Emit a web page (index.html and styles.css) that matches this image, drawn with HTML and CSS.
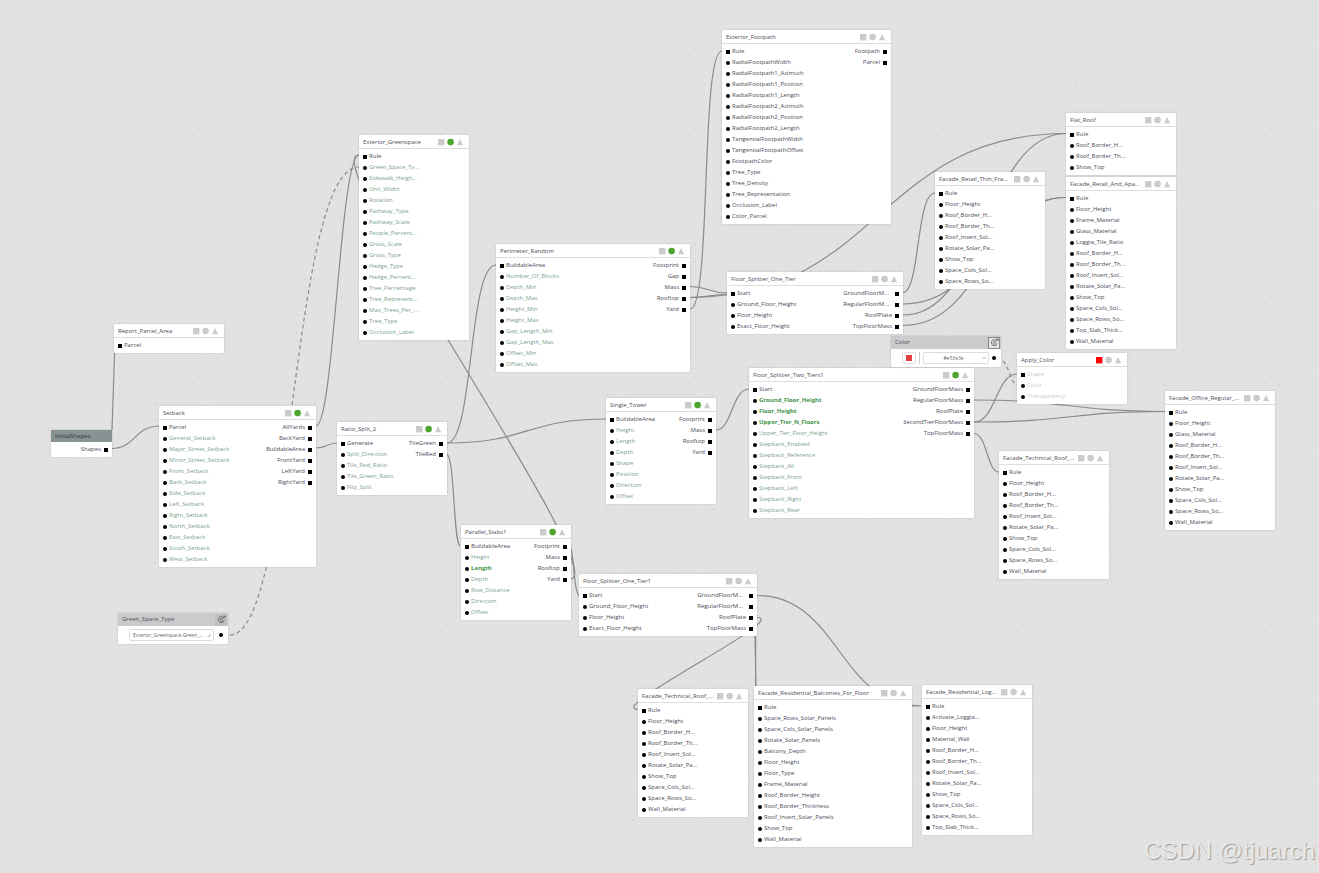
FILE: index.html
```html
<!DOCTYPE html>
<html lang="en">
<head>
<meta charset="utf-8">
<title>Rule graph</title>
<link rel="stylesheet" href="styles.css">
</head>
<body>
<svg class="defs" aria-hidden="true">
  <symbol id="flags" viewBox="0 0 26 8">
    <rect class="flag-square" x="0" y="1" width="6.4" height="6.4"/>
    <circle class="flag-circle" cx="12.6" cy="4.1" r="3.3"/>
    <path class="flag-triangle" d="M22.1 1 25.2 7.2H19Z"/>
  </symbol>
  <symbol id="link" viewBox="0 0 10 10">
    <path d="M7.6 3.4A3.3 3.3 0 1 0 8 5.6M6.2 4.3A1.5 1.5 0 1 0 6.2 5.9M5.4 5.1 8.9 1.2M6.8 1.1H9V3.2M3.4 8.2H7" fill="none" stroke="currentColor" stroke-width=".8"/>
  </symbol>
</svg>
<main class="canvas">
  <svg class="wires" aria-hidden="true">
    <defs>
      <pattern id="dots" width="8.86" height="8.86" patternUnits="userSpaceOnUse"><circle cx="4.3" cy="4.6" r=".65"/></pattern>
    </defs>
    <rect class="grid" width="100%" height="100%" fill="url(#dots)"/>
    <path d="M112 430 114.6 352"/>
    <path d="M112 448.5C135 448.5 135 426 159 426"/>
    <path d="M316 426C334 426 340 155 359 155"/>
    <path d="M570 579C616 579 313 155 359 155"/>
    <path class="dashed" d="M230 635C294 635 290 167 359 167"/>
    <path d="M316 448C328 448 326 443 338 443"/>
    <path d="M447 443C474 443 468 265 496 265"/>
    <path d="M447 443C527 443 527 419 606 419"/>
    <path d="M447 454C455 460 453 540 460 546"/>
    <path d="M570 546C575 558 573 590 579 596"/>
    <path d="M716 430C732 430 732 389 749 389"/>
    <path d="M690 286.5C708 286.5 709 293 727 293"/>
    <path d="M690 297.5C708 297.5 709 295 727 294"/>
    <path d="M690 309C712 309 700 51 722 51"/>
    <path d="M690 297.5C878 297.5 878 134 1066 133.5"/>
    <path d="M903 292.5C920 292.5 916 193 935 193"/>
    <path d="M903 304C985 304 985 198 1066 197.5"/>
    <path d="M903 315C985 315 985 134 1066 133.5"/>
    <path d="M903 325.5C985 325.5 985 198 1066 197.5"/>
    <path d="M974 400C1070 400 1070 411.5 1165 411.5"/>
    <path d="M974 422C996 422 996 374 1017 374"/>
    <path d="M974 422C1070 422 1070 411.5 1165 411.5"/>
    <path d="M974 433.5C987 433.5 987 472 999 472"/>
    <path class="dashed" d="M1003 361C1009 366 1010 382 1017 385"/>
    <path d="M757 595.5C839 595.5 839 706 921 706"/>
    <path d="M757 617.5C792 617.5 603 709.5 638 709.5"/>
    <path d="M755 636 756 687M755.6 636V687"/>
  </svg>

  <section class="node initial-shapes">
    <header><h2>InitialShapes</h2></header>
    <div class="ports"><ul class="out"><li>Shapes</li></ul></div>
  </section>

  <section class="node report">
    <header><h2>Report_Parcel_Area</h2><svg class="flags"><use href="#flags"/></svg></header>
    <div class="ports"><ul class="in"><li>Parcel</li></ul></div>
  </section>

  <section class="node active defaults setback">
    <header><h2>Setback</h2><svg class="flags"><use href="#flags"/></svg></header>
    <div class="ports">
      <ul class="in"><li>Parcel</li><li>General_Setback</li><li>Major_Street_Setback</li><li>Minor_Street_Setback</li><li>Front_Setback</li><li>Back_Setback</li><li>Side_Setback</li><li>Left_Setback</li><li>Right_Setback</li><li>North_Setback</li><li>East_Setback</li><li>South_Setback</li><li>West_Setback</li></ul>
      <ul class="out"><li>AllYards</li><li>BackYard</li><li>BuildableArea</li><li>FrontYard</li><li>LeftYard</li><li>RightYard</li></ul>
    </div>
  </section>

  <section class="node value green-space">
    <header><h2>Green_Space_Type</h2><button type="button" aria-label="Link Green_Space_Type"><svg><use href="#link"/></svg></button></header>
    <div class="field">
      <span class="pick"><select aria-label="Green_Space_Type"><option>Exterior_Greenspace.Green_...</option></select><svg viewBox="0 0 6 6"><path d="M1.5 4 2.5 5 4.5 2"/></svg></span>
      <span class="dot"></span>
    </div>
  </section>

  <section class="node active defaults greenspace">
    <header><h2>Exterior_Greenspace</h2><svg class="flags"><use href="#flags"/></svg></header>
    <div class="ports">
      <ul class="in"><li>Rule</li><li>Green_Space_Ty...</li><li>Sidewalk_Heigh...</li><li>Unit_Width</li><li>Rotation</li><li>Pathway_Type</li><li>Pathway_Scale</li><li>People_Percent...</li><li>Grass_Scale</li><li>Grass_Type</li><li>Hedge_Type</li><li>Hedge_Percent...</li><li>Tree_Percentage</li><li>Tree_Represent...</li><li>Max_Trees_Per_...</li><li>Tree_Type</li><li>Occlusion_Label</li></ul>
    </div>
  </section>

  <section class="node active defaults perimeter">
    <header><h2>Perimeter_Random</h2><svg class="flags"><use href="#flags"/></svg></header>
    <div class="ports">
      <ul class="in"><li>BuildableArea</li><li>Number_Of_Blocks</li><li>Depth_Min</li><li>Depth_Max</li><li>Height_Min</li><li>Height_Max</li><li>Gap_Length_Min</li><li>Gap_Length_Max</li><li>Offset_Min</li><li>Offset_Max</li></ul>
      <ul class="out"><li>Footprint</li><li>Gap</li><li>Mass</li><li>Rooftop</li><li>Yard</li></ul>
    </div>
  </section>

  <section class="node active defaults ratio">
    <header><h2>Ratio_Split_2</h2><svg class="flags"><use href="#flags"/></svg></header>
    <div class="ports">
      <ul class="in"><li>Generate</li><li>Split_Direction</li><li>Tile_Red_Ratio</li><li>Tile_Green_Ratio</li><li>Flip_Split</li></ul>
      <ul class="out"><li>TileGreen</li><li>TileRed</li></ul>
    </div>
  </section>

  <section class="node active defaults slabs">
    <header><h2>Parallel_Slabs1</h2><svg class="flags"><use href="#flags"/></svg></header>
    <div class="ports">
      <ul class="in"><li>BuildableArea</li><li>Height</li><li class="set">Length</li><li>Depth</li><li>Row_Distance</li><li>Direction</li><li>Offset</li></ul>
      <ul class="out"><li>Footprint</li><li>Mass</li><li>Rooftop</li><li>Yard</li></ul>
    </div>
  </section>

  <section class="node active defaults tower">
    <header><h2>Single_Tower</h2><svg class="flags"><use href="#flags"/></svg></header>
    <div class="ports">
      <ul class="in"><li>BuildableArea</li><li>Height</li><li>Length</li><li>Depth</li><li>Shape</li><li>Position</li><li>Direction</li><li>Offset</li></ul>
      <ul class="out"><li>Footprint</li><li>Mass</li><li>Rooftop</li><li>Yard</li></ul>
    </div>
  </section>

  <section class="node footpath">
    <header><h2>Exterior_Footpath</h2><svg class="flags"><use href="#flags"/></svg></header>
    <div class="ports">
      <ul class="in"><li>Rule</li><li>RadialFootpathWidth</li><li>RadialFootpath1_Azimuth</li><li>RadialFootpath1_Position</li><li>RadialFootpath1_Length</li><li>RadialFootpath2_Azimuth</li><li>RadialFootpath2_Position</li><li>RadialFootpath2_Length</li><li>TangentialFootpathWidth</li><li>TangentialFootpathOffset</li><li>FootpathColor</li><li>Tree_Type</li><li>Tree_Density</li><li>Tree_Representation</li><li>Occlusion_Label</li><li>Color_Parcel</li></ul>
      <ul class="out"><li>Footpath</li><li>Parcel</li></ul>
    </div>
  </section>

  <section class="node one-tier">
    <header><h2>Floor_Splitter_One_Tier</h2><svg class="flags"><use href="#flags"/></svg></header>
    <div class="ports">
      <ul class="in"><li>Start</li><li>Ground_Floor_Height</li><li>Floor_Height</li><li>Exact_Floor_Height</li></ul>
      <ul class="out"><li class="cut">GroundFloorM...</li><li class="cut">RegularFloorM...</li><li>RoofPlate</li><li>TopFloorMass</li></ul>
    </div>
  </section>

  <section class="node thin">
    <header><h2>Facade_Retail_Thin_Fra...</h2><svg class="flags"><use href="#flags"/></svg></header>
    <div class="ports">
      <ul class="in"><li>Rule</li><li>Floor_Height</li><li>Roof_Border_H...</li><li>Roof_Border_Th...</li><li>Roof_Insert_Sol...</li><li>Rotate_Solar_Pa...</li><li>Show_Top</li><li>Space_Cols_Sol...</li><li>Space_Rows_So...</li></ul>
    </div>
  </section>

  <section class="node flat">
    <header><h2>Flat_Roof</h2><svg class="flags"><use href="#flags"/></svg></header>
    <div class="ports"><ul class="in"><li>Rule</li><li>Roof_Border_H...</li><li>Roof_Border_Th...</li><li>Show_Top</li></ul></div>
  </section>

  <section class="node apartments">
    <header><h2>Facade_Retail_And_Apa...</h2><svg class="flags"><use href="#flags"/></svg></header>
    <div class="ports">
      <ul class="in"><li>Rule</li><li>Floor_Height</li><li>Frame_Material</li><li>Glass_Material</li><li>Loggia_Tile_Ratio</li><li>Roof_Border_H...</li><li>Roof_Border_Th...</li><li>Roof_Insert_Sol...</li><li>Rotate_Solar_Pa...</li><li>Show_Top</li><li>Space_Cols_Sol...</li><li>Space_Rows_So...</li><li>Top_Slab_Thick...</li><li>Wall_Material</li></ul>
    </div>
  </section>

  <section class="node active defaults two-tiers">
    <header><h2>Floor_Splitter_Two_Tiers1</h2><svg class="flags"><use href="#flags"/></svg></header>
    <div class="ports">
      <ul class="in"><li>Start</li><li class="set">Ground_Floor_Height</li><li class="set">Floor_Height</li><li class="set">Upper_Tier_N_Floors</li><li>Upper_Tier_Floor_Height</li><li>Stepback_Enabled</li><li>Stepback_Reference</li><li>Stepback_All</li><li>Stepback_Front</li><li>Stepback_Left</li><li>Stepback_Right</li><li>Stepback_Rear</li></ul>
      <ul class="out"><li>GroundFloorMass</li><li>RegularFloorMass</li><li>RoofPlate</li><li>SecondTierFloorMass</li><li>TopFloorMass</li></ul>
    </div>
  </section>

  <section class="node value selected color">
    <header><h2>Color</h2><button type="button" aria-label="Link Color"><svg><use href="#link"/></svg></button></header>
    <div class="field">
      <input type="color" value="#e53e3e" aria-label="Color swatch">
      <span class="bar"></span>
      <span class="pick"><select aria-label="Color value"><option>#e53e3e</option></select><svg viewBox="0 0 6 6"><path d="M1.5 2.2 3 3.8 4.5 2.2"/></svg></span>
      <span class="dot"></span>
    </div>
  </section>

  <section class="node failed apply">
    <header><h2>Apply_Color</h2><svg class="flags"><use href="#flags"/></svg></header>
    <div class="ports"><ul class="in"><li>Shape</li><li>Color</li><li>Transparency</li></ul></div>
  </section>

  <section class="node office">
    <header><h2>Facade_Office_Regular_...</h2><svg class="flags"><use href="#flags"/></svg></header>
    <div class="ports">
      <ul class="in"><li>Rule</li><li>Floor_Height</li><li>Glass_Material</li><li>Roof_Border_H...</li><li>Roof_Border_Th...</li><li>Roof_Insert_Sol...</li><li>Rotate_Solar_Pa...</li><li>Show_Top</li><li>Space_Cols_Sol...</li><li>Space_Rows_So...</li><li>Wall_Material</li></ul>
    </div>
  </section>

  <section class="node technical">
    <header><h2>Facade_Technical_Roof_...</h2><svg class="flags"><use href="#flags"/></svg></header>
    <div class="ports">
      <ul class="in"><li>Rule</li><li>Floor_Height</li><li>Roof_Border_H...</li><li>Roof_Border_Th...</li><li>Roof_Insert_Sol...</li><li>Rotate_Solar_Pa...</li><li>Show_Top</li><li>Space_Cols_Sol...</li><li>Space_Rows_So...</li><li>Wall_Material</li></ul>
    </div>
  </section>

  <section class="node one-tier1">
    <header><h2>Floor_Splitter_One_Tier1</h2><svg class="flags"><use href="#flags"/></svg></header>
    <div class="ports">
      <ul class="in"><li>Start</li><li>Ground_Floor_Height</li><li>Floor_Height</li><li>Exact_Floor_Height</li></ul>
      <ul class="out"><li class="cut">GroundFloorM...</li><li class="cut">RegularFloorM...</li><li>RoofPlate</li><li>TopFloorMass</li></ul>
    </div>
  </section>

  <section class="node technical-low">
    <header><h2>Facade_Technical_Roof_...</h2><svg class="flags"><use href="#flags"/></svg></header>
    <div class="ports">
      <ul class="in"><li>Rule</li><li>Floor_Height</li><li>Roof_Border_H...</li><li>Roof_Border_Th...</li><li>Roof_Insert_Sol...</li><li>Rotate_Solar_Pa...</li><li>Show_Top</li><li>Space_Cols_Sol...</li><li>Space_Rows_So...</li><li>Wall_Material</li></ul>
    </div>
  </section>

  <section class="node balconies">
    <header><h2>Facade_Residential_Balconies_For_Floor</h2><svg class="flags"><use href="#flags"/></svg></header>
    <div class="ports">
      <ul class="in"><li>Rule</li><li>Space_Rows_Solar_Panels</li><li>Space_Cols_Solar_Panels</li><li>Rotate_Solar_Panels</li><li>Balcony_Depth</li><li>Floor_Height</li><li>Floor_Type</li><li>Frame_Material</li><li>Roof_Border_Height</li><li>Roof_Border_Thickness</li><li>Roof_Insert_Solar_Panels</li><li>Show_Top</li><li>Wall_Material</li></ul>
    </div>
  </section>

  <section class="node loggia">
    <header><h2>Facade_Residential_Log...</h2><svg class="flags"><use href="#flags"/></svg></header>
    <div class="ports">
      <ul class="in"><li>Rule</li><li>Activate_Loggia...</li><li>Floor_Height</li><li>Material_Wall</li><li>Roof_Border_H...</li><li>Roof_Border_Th...</li><li>Roof_Insert_Sol...</li><li>Rotate_Solar_Pa...</li><li>Show_Top</li><li>Space_Cols_Sol...</li><li>Space_Rows_So...</li><li>Top_Slab_Thick...</li></ul>
    </div>
  </section>

  <p class="watermark">CSDN @tjuarch</p>
</main>
</body>
</html>
```

FILE: styles.css
```css
* { box-sizing: border-box; }

body { margin: 0; }

.defs { position: absolute; width: 0; height: 0; }

.canvas {
  position: relative;
  min-height: 100vh;
  overflow: hidden;
  background: #e2e2e2;
  color: #4c4c58;
  font: 6px/11px "Open Sans", "Noto Sans", sans-serif;
}

/* Wires and the dotted grid sit behind every node. */
.wires { position: absolute; inset: 0; width: 100%; height: 100%; }
.wires path { fill: none; stroke: #8a8a8a; stroke-width: 1.2; }
.wires .dashed { stroke-dasharray: 4 3; }
.wires pattern circle { fill: #c6c6c6; }

/* Node cards */
.node {
  position: absolute;
  width: 110px;
  background: #fff;
  border-radius: 1px;
  box-shadow: 0 0 2px rgba(0, 0, 0, .2);
}

.node header {
  display: flex;
  align-items: center;
  justify-content: space-between;
  height: 14px;
  padding: 1px 5px 0 4px;
  border-bottom: 1px solid #dedede;
}

.node h2 { margin: 0; font-size: 6px; font-weight: 400; white-space: nowrap; }

.flags { flex: none; width: 26px; height: 8px; fill: #cbcbcb; }
.flag-square { fill: var(--square, #cbcbcb); }
.flag-circle { fill: var(--circle, #cbcbcb); }
.active { --circle: #4ca52d; }
.failed { --square: #f00; }

.ports { display: flex; justify-content: space-between; padding: 2px 4px; }
.ports ul { margin: 0; padding: 0; list-style: none; }
.ports .out { margin-left: auto; }
.ports li { display: flex; align-items: center; gap: 2px; height: 11px; white-space: nowrap; }
.ports .out li { justify-content: flex-end; gap: 3px; }
.ports .out .cut { gap: 6px; }

.in li::before, .out li::after, .dot {
  content: "";
  flex: none;
  width: 4px;
  height: 4px;
  background: #000;
}
.in li:not(:first-child)::before, .dot { border-radius: 50%; }

.defaults .in li:not(:first-child) { color: #7d9f8c; }
.defaults .in .set:not(:first-child) { color: #3f9248; font-weight: 700; }
.failed .in { color: #ccc; }

/* Value nodes */
.initial-shapes header { height: 12px; padding-top: 0; background: #879295; border: 0; color: #333; }
.value header { height: 13px; padding: 0 1px 0 4px; background: #cbcbcb; border: 0; }
.value button {
  display: flex;
  align-items: center;
  justify-content: center;
  width: 12px;
  height: 12px;
  padding: 0;
  background: #c0c0c0;
  border: 0;
  color: #555;
}
.value button svg { flex: none; width: 9px; height: 9px; }
.selected button { background: #e6e6e6; border: 1px solid #888; }

.field { display: flex; align-items: center; gap: 3px; height: 18px; padding: 0 5px 0 11px; }
.field .dot { margin-left: auto; }
.pick { position: relative; display: flex; flex: 1; max-width: 85px; }
.pick select {
  appearance: none;
  width: 100%;
  height: 12px;
  padding: 0 10px 0 3px;
  background: #fff;
  border: 1px solid #ddd;
  border-radius: 2px;
  color: #666;
  font: 5px/10px "Open Sans", "Noto Sans", sans-serif;
}
.pick svg { position: absolute; right: 2px; top: 3px; width: 6px; height: 6px; pointer-events: none; }
.pick path { fill: none; stroke: #888; stroke-width: .7; }
.color .pick select { padding-right: 8px; text-align: center; text-align-last: center; }
.field input {
  appearance: none;
  width: 14px;
  height: 12px;
  padding: 2px 3px;
  background: #fff;
  border: 1px solid #ddd;
  border-radius: 2px;
}
.field input::-webkit-color-swatch-wrapper { padding: 0; }
.field input::-webkit-color-swatch { border: 0; border-radius: 0; }
.bar { width: 1px; height: 12px; background: #ccc; }

/* Node places on the canvas */
.initial-shapes { left: 51px; top: 430px; width: 61px; }
.report { left: 114px; top: 324px; }
.setback { left: 159px; top: 406px; width: 157px; }
.green-space { left: 118px; top: 613px; }
.greenspace { left: 359px; top: 135px; }
.perimeter { left: 496px; top: 244px; width: 194px; }
.ratio { left: 337px; top: 422px; }
.slabs { left: 461px; top: 525px; }
.tower { left: 606px; top: 398px; }
.footpath { left: 722px; top: 30px; width: 169px; }
.one-tier { left: 727px; top: 272px; width: 176px; }
.thin { left: 935px; top: 172px; }
.flat { left: 1066px; top: 113px; }
.apartments { left: 1066px; top: 177px; }
.two-tiers { left: 749px; top: 368px; width: 225px; }
.color { left: 891px; top: 336px; }
.apply { left: 1017px; top: 353px; }
.office { left: 1165px; top: 391px; }
.technical { left: 999px; top: 451px; }
.one-tier1 { left: 579px; top: 574px; width: 178px; }
.technical-low { left: 638px; top: 689px; }
.balconies { left: 754px; top: 686px; width: 158px; }
.loggia { left: 922px; top: 685px; }

.watermark {
  position: absolute;
  right: 4px;
  bottom: 6px;
  margin: 0;
  color: #e9e9e9;
  font: 24px/32px "Liberation Sans", Arial, sans-serif;
  text-shadow: 1px 1px 1px #9a9a9a;
}
```
